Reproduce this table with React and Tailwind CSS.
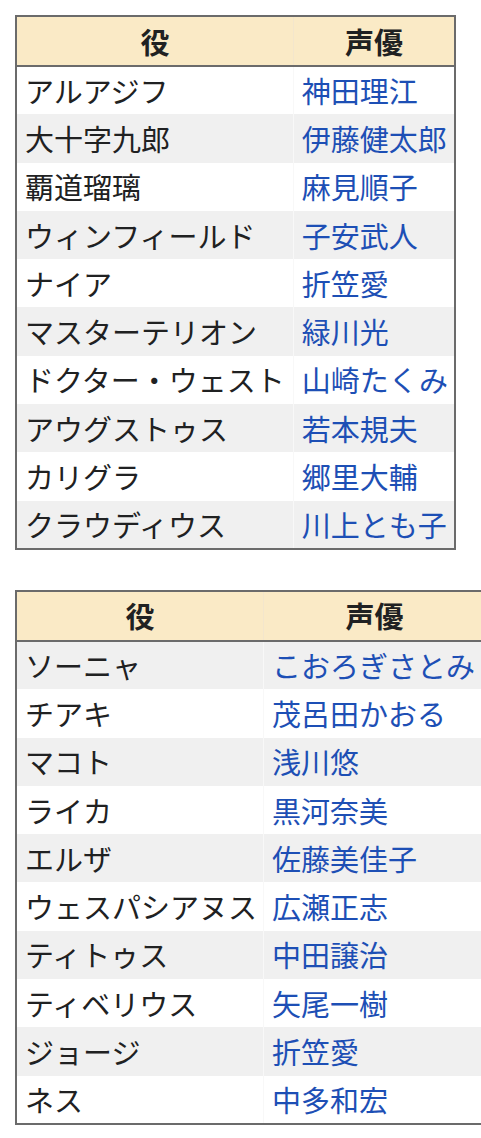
const first = [
  ['アルアジフ', '神田理江'],
  ['大十字九郎', '伊藤健太郎'],
  ['覇道瑠璃', '麻見順子'],
  ['ウィンフィールド', '子安武人'],
  ['ナイア', '折笠愛'],
  ['マスターテリオン', '緑川光'],
  ['ドクター・ウェスト', '山崎たくみ'],
  ['アウグストゥス', '若本規夫'],
  ['カリグラ', '郷里大輔'],
  ['クラウディウス', '川上とも子'],
]

const second = [
  ['ソーニャ', 'こおろぎさとみ'],
  ['チアキ', '茂呂田かおる'],
  ['マコト', '浅川悠'],
  ['ライカ', '黒河奈美'],
  ['エルザ', '佐藤美佳子'],
  ['ウェスパシアヌス', '広瀬正志'],
  ['ティトゥス', '中田譲治'],
  ['ティベリウス', '矢尾一樹'],
  ['ジョージ', '折笠愛'],
  ['ネス', '中多和宏'],
]

function CastTable({ rows, oddGray, tight }) {
  const rolePad = tight ? 'pr-[6px]' : 'pr-[8px]'
  const actorPad = tight ? 'pr-[10px]' : 'pr-[6px]'
  return (
    <table className="border-collapse border-2 border-[#6b6b6b] text-[29px] leading-none text-[#202122]">
      <thead>
        <tr className="bg-[#faeac6]">
          <th className="h-[50px] border-b-2 border-b-[#6b6b6b] border-r border-r-[#f3e6cc] px-[8px] text-center font-bold">役</th>
          <th className="h-[50px] border-b-2 border-b-[#6b6b6b] px-[8px] text-center font-bold">声優</th>
        </tr>
      </thead>
      <tbody>
        {rows.map(([role, actor], i) => {
          const gray = oddGray ? i % 2 === 0 : i % 2 === 1
          return (
            <tr key={role} className={gray ? 'bg-[#f0f0f0]' : 'bg-white'}>
              <td className={`h-[48.3px] whitespace-nowrap border-r border-r-[#f8f8f8] pl-[8px] text-left ${rolePad}`}>{role}</td>
              <td className={`h-[48.3px] whitespace-nowrap pl-[8px] text-left text-[#1d4fb5] ${actorPad}`}>{actor}</td>
            </tr>
          )
        })}
      </tbody>
    </table>
  )
}

export default function App() {
  return (
    <div
      className="min-h-[1138px] w-[481px] overflow-hidden bg-white pl-[15px] pt-[15px]"
      style={{ fontFamily: '"Noto Sans CJK JP", "Noto Sans", sans-serif' }}
    >
      <CastTable rows={first} oddGray={false} />
      <div className="mt-[40px]">
        <CastTable rows={second} oddGray={true} tight />
      </div>
    </div>
  )
}
